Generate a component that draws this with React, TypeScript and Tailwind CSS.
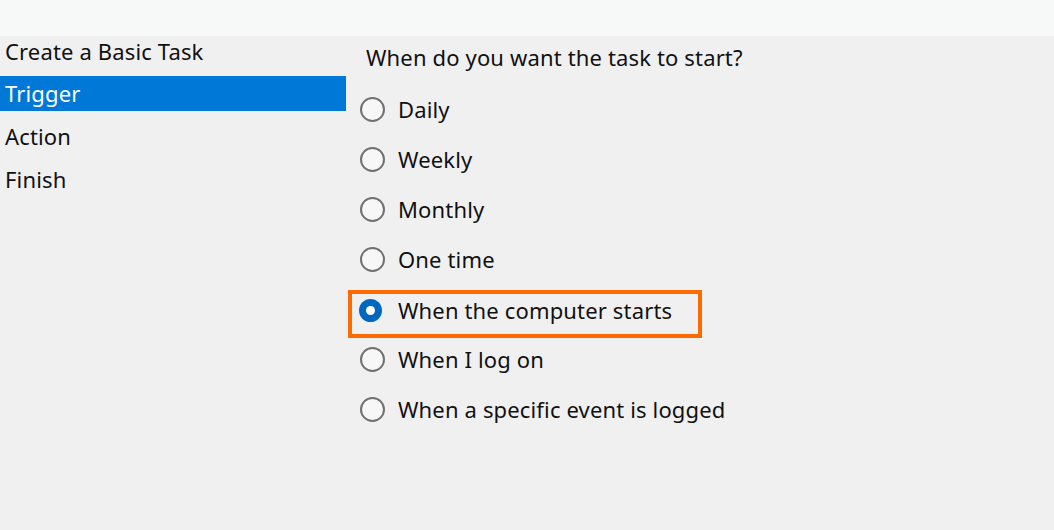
const steps = ["Create a Basic Task", "Trigger", "Action", "Finish"];
const options = [
  "Daily",
  "Weekly",
  "Monthly",
  "One time",
  "When the computer starts",
  "When I log on",
  "When a specific event is logged",
];

export default function App() {
  return (
    <div
      className="flex h-[530px] w-[1054px] flex-col bg-[#f0f0f0] text-[22px] tracking-[0.15px] text-[#111]"
      style={{ fontFamily: '"Noto Sans", "Open Sans", sans-serif' }}
    >
      <div className="h-[36px] bg-[#f7f9f8]" />
      <div className="flex flex-1">
        <ul className="flex w-[346px] flex-col gap-[8px]">
          {steps.map((s, i) => (
            <li
              key={s}
              className={
                "flex items-center pl-[5px] " +
                (i === 0 ? "mb-[2px] h-[30px] " : "h-[35px] ") +
                (i === 1 ? "bg-[#0078d7] text-white" : "")
              }
            >
              {s}
            </li>
          ))}
        </ul>
        <div className="flex flex-col pl-[14px]">
          <div className="flex h-[42px] items-center pl-[6px]">When do you want the task to start?</div>
          <div className="mt-[6px] flex flex-col">
            {options.map((o, i) =>
              i === 4 ? (
                <div
                  key={o}
                  className="-mb-[4px] -ml-[12px] mt-[6px] flex h-[48px] w-[354px] items-center border-[4px] border-[#ff6a00] pb-[8px] pl-[7px]"
                >
                  <span className="flex h-[23px] w-[23px] items-center justify-center rounded-full bg-[#0067c0]">
                    <span className="h-[9px] w-[9px] rounded-full bg-white" />
                  </span>
                  <span className="ml-[16px]">{o}</span>
                </div>
              ) : (
                <div key={o} className="flex h-[50px] items-center gap-[13px]">
                  <span className="h-[25px] w-[25px] rounded-full border-2 border-[#707070] bg-[#f7f7f7]" />
                  <span>{o}</span>
                </div>
              )
            )}
          </div>
        </div>
      </div>
    </div>
  );
}
